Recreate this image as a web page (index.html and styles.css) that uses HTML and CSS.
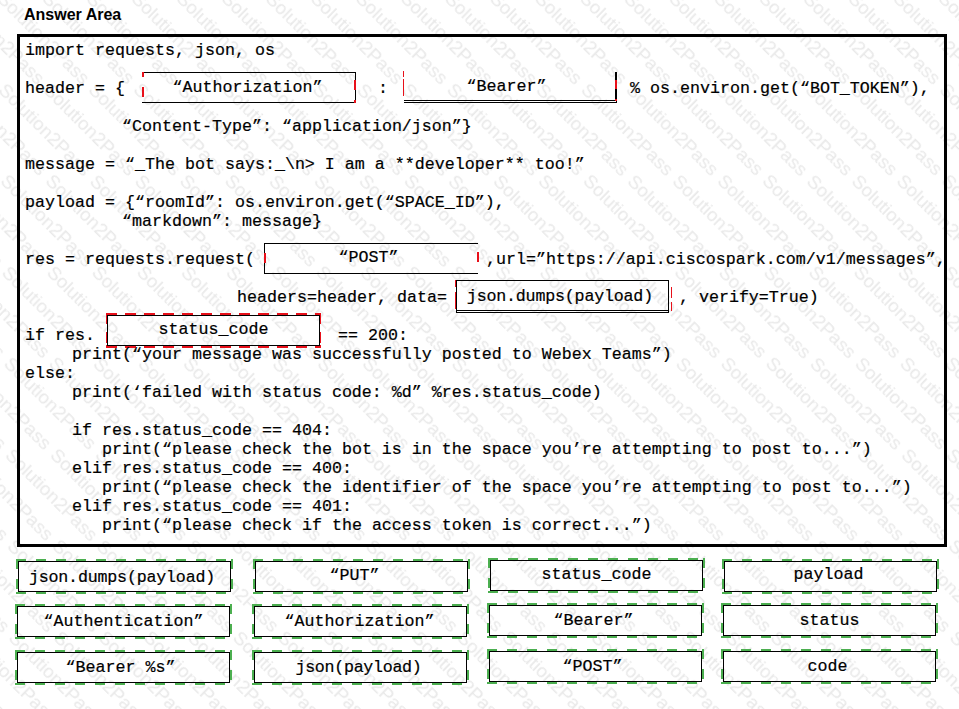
FILE: index.html
```html
<!DOCTYPE html>
<html lang="en">
<head>
<meta charset="utf-8">
<title>Answer Area</title>
<link rel="stylesheet" href="styles.css">
</head>
<body>
<svg class="watermark" width="959" height="709" aria-hidden="true">
  <defs>
    <pattern id="wm" width="129.1" height="126.72" patternUnits="userSpaceOnUse" patternTransform="translate(10 -14.7) rotate(45) skewX(1.08)">
      <text class="wm-text" x="0" y="20">Solution2Pass</text>
      <text class="wm-text" x="96.82" y="51.68">Solution2Pass</text>
      <text class="wm-text" x="-32.28" y="51.68">Solution2Pass</text>
      <text class="wm-text" x="64.55" y="83.36">Solution2Pass</text>
      <text class="wm-text" x="-64.55" y="83.36">Solution2Pass</text>
      <text class="wm-text" x="32.27" y="115.04">Solution2Pass</text>
      <text class="wm-text" x="-96.83" y="115.04">Solution2Pass</text>
    </pattern>
  </defs>
  <rect width="959" height="709" fill="url(#wm)"/>
</svg>

<h1 class="title">Answer Area</h1>

<main class="code">
  <div class="line">import requests, json, os</div>
  <div class="line"></div>
  <div class="line">header = {<div class="zone zone-auth pr-2">“Authorization”</div><span class="colon">:</span><div class="zone zone-bearer pr-6">“Bearer”</div><span class="after-bearer">% os.environ.get(“BOT_TOKEN”),</span></div>
  <div class="line"></div>
  <div class="line indent-97">“Content-Type”: “application/json”}</div>
  <div class="line"></div>
  <div class="line">message = “_The bot says:_\n&gt; I am a **developer** too!”</div>
  <div class="line"></div>
  <div class="line">payload = {“roomId”: os.environ.get(“SPACE_ID”),</div>
  <div class="line indent-97">“markdown”: message}</div>
  <div class="line"></div>
  <div class="line">res = requests.request(<div class="zone zone-post pr-6">“POST”</div><span class="after-post">,url=”https://api.ciscospark.com/v1/messages”,</span></div>
  <div class="line"></div>
  <div class="line indent-212">headers=header, data=<div class="zone zone-json"><span class="json-text">json.dumps(payload)</span></div><span class="after-json">, verify=True)</span></div>
  <div class="line"></div>
  <div class="line">if res.<div class="zone zone-status">status_code</div><span class="after-status">== 200:</span></div>
  <div class="line indent-47">print(“your message was successfully posted to Webex Teams”)</div>
  <div class="line">else:</div>
  <div class="line indent-47">print(‘failed with status code: %d” %res.status_code)</div>
  <div class="line"></div>
  <div class="line indent-47">if res.status_code == 404:</div>
  <div class="line indent-77">print(“please check the bot is in the space you’re attempting to post to...”)</div>
  <div class="line indent-47">elif res.status_code == 400:</div>
  <div class="line indent-77">print(“please check the identifier of the space you’re attempting to post to...”)</div>
  <div class="line indent-47">elif res.status_code == 401:</div>
  <div class="line indent-77">print(“please check if the access token is correct...”)</div>
</main>

<section class="tokens">
  <div class="token shift-x shift-y token-low"><span class="json-text">json.dumps(payload)</span></div>
  <div class="token shift-x shift-y token-high pr-14">“PUT”</div>
  <div class="token shift-x token-high">status_code</div>
  <div class="token shift-x shift-y token-higher pr-4">payload</div>
  <div class="token shift-y">“Authentication”</div>
  <div class="token shift-y pr-2">“Authorization”</div>
  <div class="token pr-4">“Bearer”</div>
  <div class="token">status</div>
  <div class="token shift-y pr-6">“Bearer %s”</div>
  <div class="token shift-y pr-4 tight">json(payload)</div>
  <div class="token pr-6">“POST”</div>
  <div class="token pr-4">code</div>
</section>
</body>
</html>
```
FILE: styles.css
```css
* { box-sizing: border-box; }

html, body {
  margin: 0;
  height: 709px;
  overflow: hidden;
  background: #fff;
}

body {
  position: relative;
  z-index: 0;
  font-family: "Liberation Mono", "Courier New", monospace;
  font-size: 16.67px;
  color: #000;
  -webkit-text-stroke: 0.2px #000;
}

.watermark {
  position: absolute;
  left: 0;
  top: 0;
  z-index: -1;
  -webkit-text-stroke: 0;
}

.wm-text {
  font-family: "Liberation Sans", Arial, sans-serif;
  font-size: 19px;
  fill: #e9e9e9;
}

.title {
  margin: 0;
  height: 34px;
  padding: 5px 0 0 24px;
  font-family: "Liberation Sans", Arial, sans-serif;
  font-size: 16px;
  line-height: 19px;
  font-weight: 700;
  -webkit-text-stroke: 0;
}

.code {
  width: 930px;
  height: 513px;
  margin-left: 17px;
  padding: 4px 0 0 5px;
  border: 3px solid #000;
}

.line {
  display: flex;
  align-items: center;
  height: 19px;
  white-space: pre;
}

.indent-47 { padding-left: 47px; }
.indent-77 { padding-left: 77px; }
.indent-97 { padding-left: 97px; }
.indent-212 { padding-left: 212px; }

.colon { margin-left: 22px; }
.after-bearer { margin-left: 13px; }
.after-post { margin-left: 8px; }
.after-json { margin-left: 10px; }
.after-status { margin-left: 18px; }

/* Drop zones in the code */
.zone {
  position: relative;
  flex: none;
  display: flex;
  align-items: center;
  justify-content: center;
  width: 214px;
  height: 31px;
  margin-top: -2px;
  padding-bottom: 2px;
  border: 1px solid #000;
}

.zone::before,
.zone::after {
  content: "";
  position: absolute;
  top: -1px;
  bottom: -1px;
  width: 2px;
}

.zone::before { left: -1px; }
.zone::after { right: -1px; }

.zone-auth {
  margin-left: 17px;
  padding-bottom: 0;
  border-left: 0;
}

.zone-auth::before {
  left: 0;
  background: linear-gradient(#e8101a 0 5px, transparent 5px 15px, #e8101a 15px 25px, transparent 25px);
}

.zone-auth::after {
  background: linear-gradient(transparent 0 8px, #e8101a 8px 18px, transparent 18px 28px, #e8101a 28px);
}

.zone-bearer {
  width: 213px;
  margin-left: 16px;
  border-top: 0;
  border-left: 0;
  border-right: 2px solid #000;
  border-bottom: 3px double #000;
  padding-bottom: 0;
}

.zone-bearer::before {
  left: -1px;
  width: 1px;
  background: linear-gradient(#e8101a 0 6px, transparent 6px 8px, #e8101a 8px 25px, transparent 25px);
}

.zone-bearer::after {
  right: -2px;
  background: linear-gradient(transparent 0 9px, #e8101a 9px 18px, transparent 18px 28px, #e8101a 28px);
}

.zone-post {
  margin-left: 9px;
  border-right: 0;
}

.zone-post::before {
  left: -1px;
  background: linear-gradient(transparent 0 10px, #e8101a 10px 20px, transparent 20px);
}

.zone-post::after {
  right: -1px;
  background: linear-gradient(transparent 0 9px, #e8101a 9px 19px, transparent 19px);
}

.zone-json {
  margin-left: 9px;
  width: 213px;
  height: 33px;
  padding: 2px 0 0;
  border-bottom: 3px double #000;
}

.zone-json::before {
  left: -2px;
  background: linear-gradient(#e8101a 0 7px, transparent 7px 12px, #e8101a 12px 29px, transparent 29px);
  width: 1px;
}

.zone-json::after {
  right: -4px;
  width: 1px;
  background: linear-gradient(transparent 0 7px, #e8101a 7px 18px, transparent 18px 22px, #e8101a 22px);
}

.zone-status {
  width: 213px;
  margin-left: 12px;
  margin-top: -11px;
}

.zone-status::before {
  inset: -3px -2px -3px -2px;
  z-index: -1;
  width: auto;
  background:
    repeating-linear-gradient(90deg, #e8101a 0 11px, transparent 11px 19px) top / 100% 3px no-repeat,
    repeating-linear-gradient(90deg, #e8101a 0 11px, transparent 11px 19px) bottom / 100% 3px no-repeat,
    repeating-linear-gradient(#e8101a 0 11px, transparent 11px 19px) left / 2px 100% no-repeat,
    repeating-linear-gradient(#e8101a 0 11px, transparent 11px 19px) right / 2px 100% no-repeat;
}

.zone-status::after { display: none; }

.json-text {
  padding-right: 5px;
  letter-spacing: -0.2px;
}

.tight { letter-spacing: -0.3px; }

.pr-2 { padding-right: 2px; }
.pr-4 { padding-right: 4px; }
.pr-6 { padding-right: 6px; }
.pr-14 { padding-right: 14px; }

/* Answer tokens */
.tokens {
  display: grid;
  grid-template-columns: 237px 235px 234px 213px;
  grid-template-rows: 45px 46px 46px;
  margin: 13px 0 0 17px;
}

.token {
  position: relative;
  display: flex;
  align-items: center;
  justify-content: center;
  width: 213px;
  height: 31px;
  border: 1px solid #000;
}

.token-low { padding-top: 2px; }
.token-high { padding-bottom: 2px; }
.token-higher { padding-bottom: 4px; }

.token::before {
  content: "";
  position: absolute;
  inset: -3px;
  z-index: -1;
  background:
    repeating-linear-gradient(90deg, #4caf50 0 10px, transparent 10px 20px) top / 100% 2px no-repeat,
    repeating-linear-gradient(90deg, #4caf50 0 10px, transparent 10px 20px) bottom / 100% 2px no-repeat,
    repeating-linear-gradient(#4caf50 0 10px, transparent 10px 20px) left / 2px 100% no-repeat,
    repeating-linear-gradient(#4caf50 0 10px, transparent 10px 20px) right / 2px 100% no-repeat;
}

.shift-x { margin-left: 1px; }
.shift-y { margin-top: 1px; }
```
